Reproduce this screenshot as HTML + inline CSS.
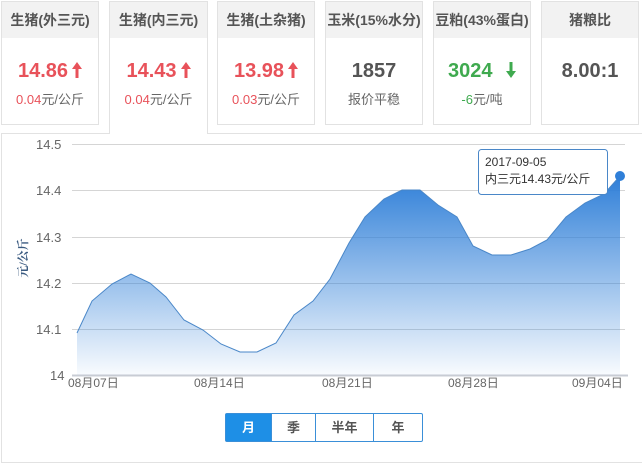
<!DOCTYPE html>
<html><head><meta charset="utf-8"><style>
*{margin:0;padding:0;box-sizing:border-box}
body{width:642px;height:451px;background:#fff;font-family:"Liberation Sans","Noto Sans CJK SC",sans-serif;position:relative;overflow:hidden}
.card{position:absolute;top:1px;width:98px;height:124px;border:1px solid #e2e2e2;background:#fff}
.card .h{height:36px;background:#f2f2f2;text-align:center;line-height:36px;font-size:14px;color:#555;font-weight:bold}
.card .v{text-align:center;font-size:20px;font-weight:bold;margin-top:21px;height:24px;line-height:24px}
.card .v svg{vertical-align:-1px;margin-left:4px}
.card .s{text-align:center;font-size:13px;color:#666;margin-top:6px}
.red{color:#e8525a}.green{color:#3faa4f}.gray{color:#555}
.act{height:133px;border-bottom:none;z-index:2}
.box{position:absolute;left:1px;top:133px;width:660px;height:330px;border:1px solid #e2e2e2}
.btns{position:absolute;left:225px;top:413px;height:29px;display:flex;border:1px solid #3a8fd8;border-radius:2px;font-size:13px;font-weight:bold}
.btns div{text-align:center;line-height:27px;color:#555;border-left:1px solid #3a8fd8}
.btns div:first-child{border-left:none;background:#1e8fe6;color:#fff}
</style></head><body>
<div class="box"></div>
<div class="card" style="left:1px"><div class="h">生猪(外三元)</div><div class="v red">14.86<svg width="10" height="16" viewBox="0 0 10 16"><path d="M5,0 L10,7 L6.5,7 L6.5,16 L3.5,16 L3.5,7 L0,7Z" fill="#e8525a"/></svg></div><div class="s"><span class="red">0.04</span>元/公斤</div></div>
<div class="card act" style="left:109px;width:99px"><div class="h">生猪(内三元)</div><div class="v red">14.43<svg width="10" height="16" viewBox="0 0 10 16"><path d="M5,0 L10,7 L6.5,7 L6.5,16 L3.5,16 L3.5,7 L0,7Z" fill="#e8525a"/></svg></div><div class="s"><span class="red">0.04</span>元/公斤</div></div>
<div class="card" style="left:217px"><div class="h">生猪(土杂猪)</div><div class="v red">13.98<svg width="10" height="16" viewBox="0 0 10 16"><path d="M5,0 L10,7 L6.5,7 L6.5,16 L3.5,16 L3.5,7 L0,7Z" fill="#e8525a"/></svg></div><div class="s"><span class="red">0.03</span>元/公斤</div></div>
<div class="card" style="left:325px"><div class="h">玉米(15%水分)</div><div class="v gray">1857</div><div class="s">报价平稳</div></div>
<div class="card" style="left:433px"><div class="h">豆粕(43%蛋白)</div><div class="v green">3024 <svg width="10" height="16" viewBox="0 0 10 16" style="margin-left:8px"><path d="M5,16 L10,9 L6.5,9 L6.5,0 L3.5,0 L3.5,9 L0,9Z" fill="#3faa4f"/></svg></div><div class="s"><span class="green">-6</span>元/吨</div></div>
<div class="card" style="left:541px"><div class="h">猪粮比</div><div class="v gray">8.00:1</div><div class="s"></div></div>
<svg style="position:absolute;left:0;top:0" width="642" height="451">
<defs><linearGradient id="g" x1="0" y1="0" x2="0" y2="1"><stop offset="0" stop-color="#2f7fd8"/><stop offset="1" stop-color="#2f7fd8" stop-opacity="0.03"/></linearGradient></defs>
<g stroke="#d5d5d5" stroke-width="1">
<line x1="72" y1="144.5" x2="625" y2="144.5"/><line x1="72" y1="190.5" x2="625" y2="190.5"/><line x1="72" y1="237.5" x2="625" y2="237.5"/><line x1="72" y1="283.5" x2="625" y2="283.5"/><line x1="72" y1="329.5" x2="625" y2="329.5"/></g>
<line x1="72" y1="375.5" x2="628" y2="375.5" stroke="#c8ccd4" stroke-width="2"/>
<path d="M77,333 L92,301 112,284 131,274 150,283 166,297 184,320 203,330 221,344 240,352 257,352 276,343 294,315 313,301 330,279 349,243 365,217 384,199 402,190 420,190 438,205 457,217 473,246 492,255 511,255 530,249 547,240 566,217 585,203 604,194 620,176 L620,375 L77,375Z" fill="url(#g)"/>
<path d="M77,333 L92,301 112,284 131,274 150,283 166,297 184,320 203,330 221,344 240,352 257,352 276,343 294,315 313,301 330,279 349,243 365,217 384,199 402,190 420,190 438,205 457,217 473,246 492,255 511,255 530,249 547,240 566,217 585,203 604,194 620,176" fill="none" stroke="#4a87c8" stroke-width="1"/>
<circle cx="620" cy="176" r="5" fill="#2f7fd8"/>
<g font-size="13" fill="#666" font-family="Liberation Sans,sans-serif">
<text x="36" y="149">14.5</text><text x="36" y="195">14.4</text><text x="36" y="242">14.3</text><text x="36" y="288">14.2</text><text x="36" y="334">14.1</text><text x="50" y="380">14</text></g>
<g font-size="12" fill="#666" font-family="Liberation Sans,Noto Sans CJK SC,sans-serif">
<text x="68" y="387">08月07日</text><text x="194" y="387">08月14日</text><text x="322" y="387">08月21日</text><text x="448" y="387">08月28日</text><text x="572" y="387">09月04日</text></g>
<text transform="translate(27,258) rotate(-90)" text-anchor="middle" font-size="12" fill="#3a5a80" font-weight="bold" font-family="Liberation Serif,Noto Serif CJK SC,serif">元/公斤</text>
<rect x="478.5" y="149.5" width="129" height="45" rx="3" fill="#fff" stroke="#4a87c8"/>
<text x="485" y="166" font-size="12" fill="#333" font-family="Liberation Sans,Noto Sans CJK SC,sans-serif">2017-09-05</text>
<text x="485" y="183" font-size="12" fill="#333" font-family="Liberation Sans,Noto Sans CJK SC,sans-serif">内三元14.43元/公斤</text>
</svg>
<div class="btns"><div style="width:45px">月</div><div style="width:44px">季</div><div style="width:58px">半年</div><div style="width:49px">年</div></div>
</body></html>
